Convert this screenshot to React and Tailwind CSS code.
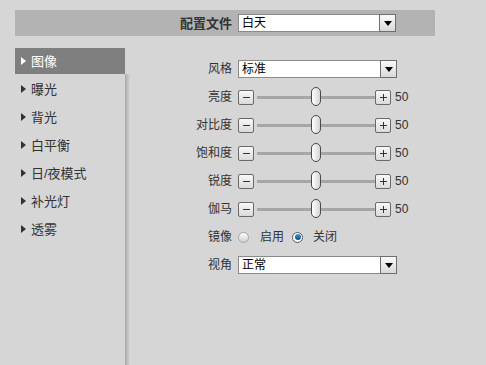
import React from "react";

const FONT = { fontFamily: '"Liberation Sans", "Noto Sans CJK SC", sans-serif' };

function Arrow({ white }) {
  return (
    <svg width="5" height="8" viewBox="0 0 5 8" className="shrink-0">
      <path d="M0 0 L5 4 L0 8 Z" fill={white ? "#ffffff" : "#333333"} />
    </svg>
  );
}

function Select({ value, width }) {
  return (
    <div
      className="h-[18px] bg-white border border-[#8a8a8a] flex items-center justify-between"
      style={{ width }}
    >
      <span className="pl-[3px] text-[12px] text-black leading-none">{value}</span>
      <div className="w-[17px] h-[18px] -mr-px border border-[#6e6e6e] bg-gradient-to-b from-[#fafafa] to-[#d8d8d8] flex items-center justify-center">
        <svg width="8" height="5" viewBox="0 0 8 5">
          <path d="M0 0 L8 0 L4 5 Z" fill="#000" />
        </svg>
      </div>
    </div>
  );
}

function StepBtn({ plus }) {
  return (
    <div className="w-[16px] h-[15px] rounded-[2px] border border-[#6a6a6a] bg-gradient-to-b from-[#f8f8f8] to-[#dadada] flex items-center justify-center shrink-0">
      <svg width="9" height="9" viewBox="0 0 9 9">
        <path d="M1 4.5 H8" stroke="#333" strokeWidth="1" />
        {plus && <path d="M4.5 1 V8" stroke="#333" strokeWidth="1" />}
      </svg>
    </div>
  );
}

function Row({ label, children }) {
  return (
    <div className="h-[28px] flex items-center">
      <div className="w-[102px] text-right text-[12px] text-[#333] leading-none">{label}</div>
      <div className="ml-[6px] flex items-center">{children}</div>
    </div>
  );
}

function Slider({ label }) {
  return (
    <Row label={label}>
      <StepBtn />
      <div className="ml-[3px] w-[118px] h-[20px] relative flex items-center">
        <div className="w-full h-[3px] bg-[#a6a6a6]" />
        <div className="absolute left-[54px] top-0 w-[10px] h-[19px] rounded-full border border-[#4a4a4a] bg-gradient-to-r from-[#ffffff] to-[#d4d4d4]" />
      </div>
      <StepBtn plus />
      <span className="ml-[4px] text-[12px] text-[#333] leading-none" style={{ fontFamily: '"Liberation Sans", sans-serif' }}>50</span>
    </Row>
  );
}

function Radio({ checked }) {
  if (checked) {
    return (
      <div className="w-[11px] h-[11px] rounded-full border border-[#5a5a5a] bg-white flex items-center justify-center shrink-0">
        <div className="w-[6px] h-[6px] rounded-full bg-gradient-to-b from-[#3d9ad6] to-[#0c4f86]" />
      </div>
    );
  }
  return (
    <div className="w-[11px] h-[11px] rounded-full border border-[#a8a8a8] bg-gradient-to-b from-[#ffffff] to-[#cfcfcf] shrink-0" />
  );
}

export default function App() {
  const menu = ["图像", "曝光", "背光", "白平衡", "日/夜模式", "补光灯", "透雾"];
  return (
    <div className="w-[486px] h-[365px] bg-[#d6d6d6] overflow-hidden" style={FONT}>
      <div className="pt-[10px] pl-[15px]">
        <div className="w-[420px] h-[26px] bg-[#b3b3b3] flex items-center">
          <div className="w-[217px] text-right text-[13px] font-bold text-[#333] leading-none">配置文件</div>
          <div className="ml-[6px]">
            <Select value="白天" width="158px" />
          </div>
        </div>
      </div>
      <div className="mt-[12px] h-[317px] flex">
        <div className="ml-[15px] w-[110px] flex flex-col">
          {menu.map((m, i) => (
            <div
              key={m}
              className={
                "h-[26px] mb-[2px] flex items-center pl-[6px] gap-[5px] text-[13px] leading-none " +
                (i === 0 ? "bg-[#7f7f7f] text-white" : "text-[#333]")
              }
            >
              <Arrow white={i === 0} />
              <span>{m}</span>
            </div>
          ))}
        </div>
        <div className="w-[5px] mt-[26px] bg-gradient-to-r from-[#a9a9a9] to-[#d6d6d6]" />
        <div className="pt-[7px] flex flex-col">
          <Row label="风格">
            <Select value="标准" width="159px" />
          </Row>
          <Slider label="亮度" />
          <Slider label="对比度" />
          <Slider label="饱和度" />
          <Slider label="锐度" />
          <Slider label="伽马" />
          <Row label="镜像">
            <Radio />
            <span className="ml-[11px] text-[12px] text-[#333] leading-none">启用</span>
            <div className="ml-[8px]"><Radio checked /></div>
            <span className="ml-[10px] text-[12px] text-[#333] leading-none">关闭</span>
          </Row>
          <Row label="视角">
            <Select value="正常" width="159px" />
          </Row>
        </div>
      </div>
    </div>
  );
}
